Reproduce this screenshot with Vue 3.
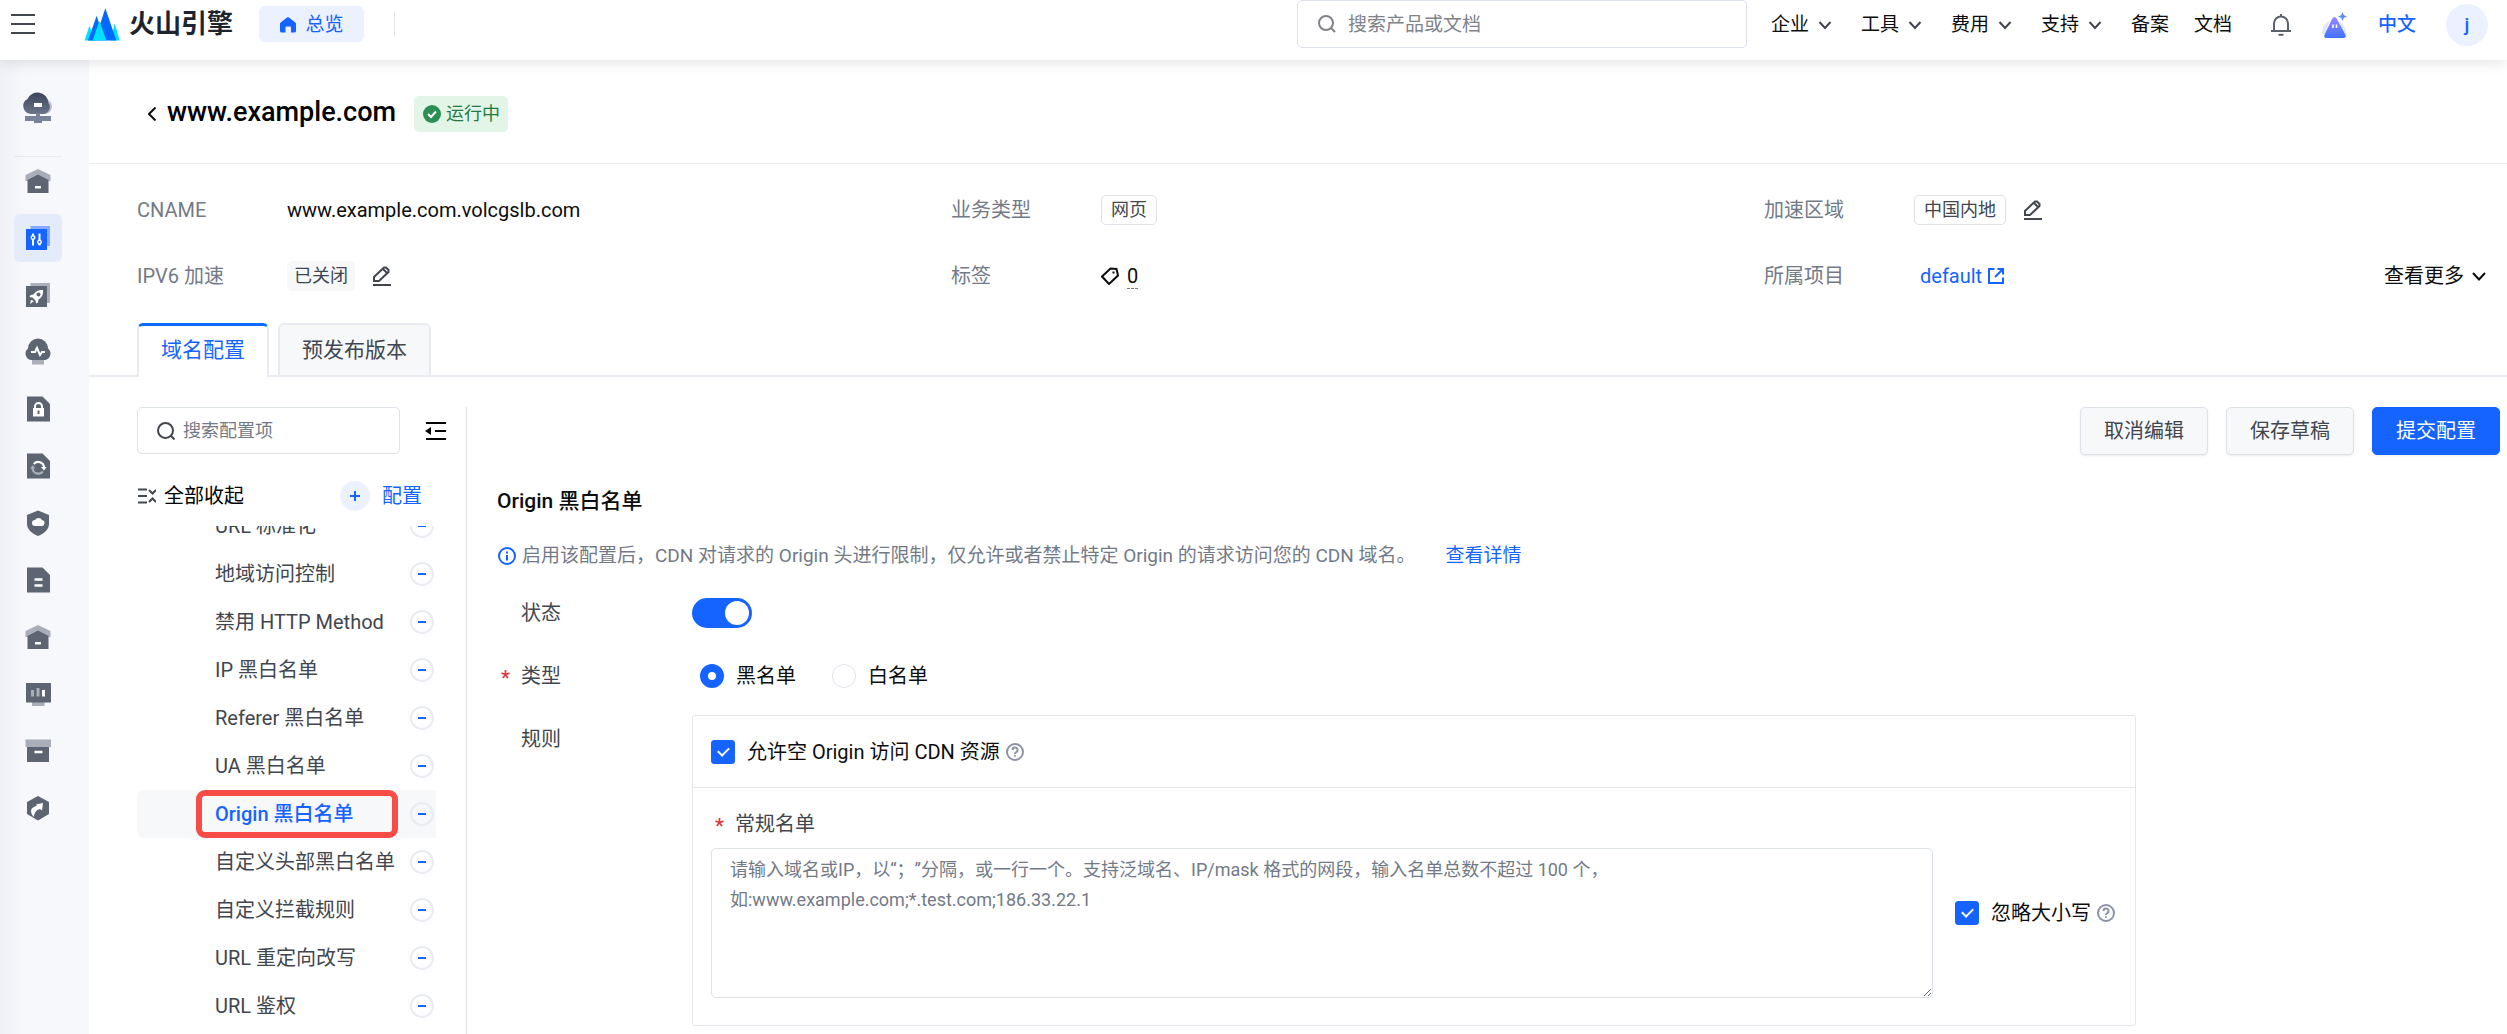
<template>
  <div class="app">
    <header class="topbar">
      <button class="menu-btn" aria-label="菜单">
        <svg viewBox="0 0 24 20" width="24" height="20"><path d="M0 1h24M0 10h24M0 19h24" stroke="#41464f" stroke-width="2"/></svg>
      </button>
      <a class="logo" href="#">
        <svg viewBox="0 0 108 98" width="36" height="33">
          <path d="M16 53 L2 97 H34Z" fill="#00e1ff"/>
          <path d="M92 45 L80 97 H107Z" fill="#00e1ff"/>
          <path d="M38 23 L12 97 H62Z" fill="#006aff"/>
          <path d="M64 0 L46 55 L62 97 H97Z" fill="#006aff"/>
          <path d="M46 38 L26 97 H67Z" fill="#00e1ff"/>
        </svg>
        <span class="brand">火山引擎</span>
      </a>
      <a class="overview" href="#">
        <svg viewBox="0 0 16 16" width="16" height="16"><path d="M7 .6a1.600 1.600 0 0 1 2 0l6.300 4.800c.5.400.7.800.7 1.400V14a1.600 1.600 0 0 1-1.600 1.600H11V10.500a1 1 0 0 0-1-1H6.500a1 1 0 0 0-1 1v5.100H1.600A1.600 1.600 0 0 1 0 14V6.800c0-.6.200-1 .7-1.400z" fill="#1664ff"/></svg>
        总览
      </a>
      <span class="split"></span>
      <label class="top-search">
        <svg class="icon" viewBox="0 0 18 18" width="18" height="18"><circle cx="8" cy="8" r="7"/><path d="M13 13l4 4"/></svg>
        <input type="text" placeholder="搜索产品或文档" aria-label="搜索产品或文档" />
      </label>
      <nav class="top-nav">
        <a v-for="item in topMenus" :key="item.name" href="#">
          {{ item.name }}
          <svg v-if="item.drop" class="icon" viewBox="0 0 14 14" width="14" height="14"><path d="M1.500 4L7 10l5.500-6"/></svg>
        </a>
      </nav>
      <div class="top-user">
        <button aria-label="消息">
          <svg viewBox="0 0 20 22" width="20" height="22" fill="none" stroke="#5c626d" stroke-width="2"><path d="M0 17h20M3 17V9.500a7 7 0 0 1 14 0V17M10 0v3"/><path d="M7.500 20.800h5"/></svg>
        </button>
        <button aria-label="智能助手">
          <svg viewBox="0 0 27 27" width="27" height="27">
            <defs>
              <linearGradient id="peak" x1="0" y1="0" x2="0" y2="1"><stop offset="0" stop-color="#9a86ff"/><stop offset="1" stop-color="#3f74ff"/></linearGradient>
            </defs>
            <path d="M8 9Q1 12 1 22l5 2zM19 9q5 4 7 14l-6 1z" fill="#e3e6ff"/>
            <path d="M11 7q2.500-4 5 0c2.500 5 5 9 8.500 16 .8 1.800 0 3-2 3h-17c-2 0-2.800-1.200-2-3C7 16 8.500 12 11 7z" fill="url(#peak)"/>
            <path d="M12 12.500v3.500M15.500 12.500v3.500" stroke="#fff" stroke-width="1.600"/>
            <path d="M21.500 0l1.300 3.200L26 4.500l-3.200 1.300L21.500 9l-1.300-3.200L17 4.500l3.200-1.300z" fill="#5a8bff"/>
          </svg>
        </button>
        <a class="lang" href="#">中文</a>
        <span class="avatar">j</span>
      </div>
    </header>

    <div class="body">
      <aside class="rail">
        <div class="rail-head">
          <svg viewBox="0 0 32 32" width="32" height="32">
            <defs>
              <linearGradient id="cloud" x1="0" y1="0" x2="0" y2="1"><stop offset="0" stop-color="#3b4559"/><stop offset="1" stop-color="#6b7589"/></linearGradient>
            </defs>
            <path d="M22 8a7.500 7.500 0 0 1 1 15H15z" fill="#b9c0ce"/>
            <path d="M8.500 23A8 8 0 0 1 5.500 8 11 11 0 0 1 26.500 12 7 7 0 0 1 22 23z" fill="url(#cloud)"/>
            <rect x="12" y="12" width="8" height="4" fill="#fff"/>
            <path d="M14 22h4v3h11v5H20v2h-8v-2H3v-5h11z" fill="#79839a"/>
          </svg>
        </div>
        <a v-for="item in railItems" :key="item.name" href="#" class="rail-item" :class="{ active: item.active }" :aria-label="item.name">
          <svg viewBox="0 0 28 28" width="28" height="28">
            <path v-for="(s, i) in item.shapes" :key="i" :d="s.d" :fill="s.fill || 'none'" :stroke="s.stroke" :stroke-width="s.w" />
          </svg>
        </a>
      </aside>

      <main class="page">
        <div class="title-row">
          <button class="back" aria-label="返回">
            <svg class="icon" viewBox="0 0 8 14" width="8" height="14"><path d="M7.500 .5L1 7l6.500 6.500"/></svg>
          </button>
          <h1>www.example.com</h1>
          <span class="status">
            <svg viewBox="0 0 18 18" width="18" height="18"><circle cx="9" cy="9" r="9" fill="#2b8f55"/><path d="M5 9l3 3 5-5.500" fill="none" stroke="#fff" stroke-width="2"/></svg>
            运行中
          </span>
        </div>

        <div class="info">
          <dl>
            <dt>CNAME</dt>
            <dd>www.example.com.volcgslb.com</dd>
          </dl>
          <dl>
            <dt>业务类型</dt>
            <dd><span class="tag">网页</span></dd>
          </dl>
          <dl>
            <dt>加速区域</dt>
            <dd>
              <span class="tag">中国内地</span>
              <button class="edit" aria-label="编辑加速区域">
                <svg viewBox="0 0 18 20" width="18" height="20"><path :d="pencil" /></svg>
              </button>
            </dd>
          </dl>
          <dl>
            <dt>IPV6 加速</dt>
            <dd>
              <span class="tag plain">已关闭</span>
              <button class="edit" aria-label="编辑 IPV6 加速">
                <svg viewBox="0 0 18 20" width="18" height="20"><path :d="pencil" /></svg>
              </button>
            </dd>
          </dl>
          <dl>
            <dt>标签</dt>
            <dd>
              <svg class="icon" viewBox="0 0 18 18" width="18" height="18"><path d="M1 9.500L9.500 1.500l6 .5 1.500 6.500L8 17z"/><path d="M11.500 5.500h2"/></svg>
              <span class="count">0</span>
            </dd>
          </dl>
          <dl>
            <dt>所属项目</dt>
            <dd>
              <a class="project" href="#">
                default
                <svg class="icon" viewBox="0 0 16 16" width="16" height="16"><path d="M6.500 1H1v14h14V9.500M9.500 1H15v5.500M15 1L7 9"/></svg>
              </a>
              <button class="more">
                查看更多
                <svg class="icon" viewBox="0 0 14 14" width="14" height="14"><path d="M1 4l6 6.500L13 4"/></svg>
              </button>
            </dd>
          </dl>
        </div>

        <div class="tabs" role="tablist">
          <button role="tab" class="tab active">域名配置</button>
          <button role="tab" class="tab">预发布版本</button>
        </div>

        <div class="workspace">
          <section class="tree">
            <div class="tree-top">
              <label class="tree-search">
                <svg class="icon" viewBox="0 0 18 18" width="18" height="18"><circle cx="8.500" cy="8.500" r="7.500"/><path d="M14 14l3.500 3.500"/></svg>
                <input type="text" placeholder="搜索配置项" aria-label="搜索配置项" />
              </label>
              <button aria-label="收起">
                <svg viewBox="0 0 22 18" width="22" height="18"><path d="M1 1h20M10 9h11M1 17h20" stroke="#000" stroke-width="2"/><path d="M6 5v8L0 9z"/></svg>
              </button>
            </div>
            <div class="tree-actions">
              <button class="collapse">
                <svg viewBox="0 0 18 16" width="18" height="16" fill="none" stroke="#41464f" stroke-width="2"><path d="M0 1.500h9M0 8h9M0 14.500h9M11 2l3.500 3.500L18 2M11 14l3.500-3.500L18 14"/></svg>
                全部收起
              </button>
              <button class="add">
                <span class="plus"><svg viewBox="0 0 10 10" width="10" height="10"><path d="M0 5h10M5 0v10" stroke="#1664ff" stroke-width="2"/></svg></span>
                配置
              </button>
            </div>
            <ul ref="list" class="tree-list">
              <li v-for="name in configs" :key="name" :class="{ active: name === current }" @click="current = name">
                <a href="#" @click.prevent>{{ name }}</a>
                <button class="minus" :aria-label="'移除 ' + name"></button>
                <span v-if="name === marked" class="mark"></span>
              </li>
            </ul>
          </section>

          <section class="detail">
            <div class="actions">
              <button>取消编辑</button>
              <button>保存草稿</button>
              <button class="primary">提交配置</button>
            </div>
            <h2>Origin 黑白名单</h2>
            <p class="hint">
              <svg class="icon" viewBox="0 0 18 18" width="18" height="18"><circle cx="9" cy="9" r="8"/><path d="M9 4.500v2M9 8v5.500"/></svg>
              启用该配置后，CDN 对请求的 Origin 头进行限制，仅允许或者禁止特定 Origin 的请求访问您的 CDN 域名。
              <a href="#">查看详情</a>
            </p>

            <div class="form">
              <label class="name" for="enabled">状态</label>
              <div class="field">
                <input id="enabled" v-model="enabled" class="switch" type="checkbox" role="switch" />
              </div>

              <span id="type-label" class="name required">类型</span>
              <div class="field radios" role="radiogroup" aria-labelledby="type-label">
                <label><input v-model="type" type="radio" name="type" value="black" />黑名单</label>
                <label><input v-model="type" type="radio" name="type" value="white" />白名单</label>
              </div>

              <span class="name">规则</span>
              <div class="panel">
                <div class="panel-head">
                  <label class="check"><input v-model="allowEmpty" type="checkbox" />允许空 Origin 访问 CDN 资源</label>
                  <svg class="icon help" viewBox="0 0 18 18" width="18" height="18"><circle cx="9" cy="9" r="8"/><path :d="question"/></svg>
                </div>
                <div class="panel-body">
                  <label class="name required" for="rules">常规名单</label>
                  <div class="rules">
                    <textarea id="rules" v-model="rules" :placeholder="placeholder"></textarea>
                    <div class="case">
                      <label class="check"><input v-model="ignoreCase" type="checkbox" />忽略大小写</label>
                      <svg class="icon help" viewBox="0 0 18 18" width="18" height="18"><circle cx="9" cy="9" r="8"/><path :d="question"/></svg>
                    </div>
                  </div>
                </div>
              </div>
            </div>
          </section>
        </div>
      </main>
    </div>
  </div>
</template>

<script setup>
import { ref, onMounted } from 'vue'

const topMenus = [
  { name: '企业', drop: true },
  { name: '工具', drop: true },
  { name: '费用', drop: true },
  { name: '支持', drop: true },
  { name: '备案' },
  { name: '文档' }
]

const dark = '#5d6573'
const light = '#a9aeb8'

const home = [
  { d: 'M14 2L26.5 8v6h-25V8z', fill: light },
  { d: 'M14 7.500L24.500 13v13h-21V13z', fill: dark },
  { d: 'M11 19h6v2.500h-6z', fill: '#fff' }
]
const sheet = { d: 'M3 1.500h15.500L26 9v17.500H3z', fill: dark }

const railItems = [
  { name: '概览', shapes: home },
  {
    name: '域名管理',
    active: true,
    shapes: [
      { d: 'M6.500 2H26v20H6.500z', fill: '#84abff' },
      { d: 'M2 5h21v21H2z', fill: '#1664ff' },
      { d: 'M9 9.500v12M15.500 9.500v12', stroke: '#fff', w: 2 },
      { d: 'M9 11a2.500 2.500 0 1 0 .01 0zM15.500 15.500a2.500 2.500 0 1 0 .01 0z', fill: '#fff' },
      { d: 'M9 12.500a1 1 0 1 0 .01 0zM15.500 17a1 1 0 1 0 .01 0z', fill: '#1664ff' }
    ]
  },
  {
    name: '刷新预热',
    shapes: [
      { d: 'M6.500 2H26v20H6.500z', fill: light },
      { d: 'M2 5h21v21H2z', fill: dark },
      { d: 'M19 9c-5-.5-8 2-9.500 4.500L6.500 14l-1 2 3 .5 3 3 .5 3 2-1 .5-3C17.500 16.500 19.500 14 19 9zM7 19l3 1-4 3z', fill: '#fff' },
      { d: 'M14.500 11.500a2 2 0 1 0 .01 0z', fill: dark }
    ]
  },
  {
    name: '监控',
    shapes: [
      { d: 'M8 20h12v6.500H8z', fill: light },
      { d: 'M7 22A6.500 6.500 0 0 1 4 10.500a10 10 0 0 1 20 0A6.500 6.500 0 0 1 21 22z', fill: dark },
      { d: 'M7 14h4l2-4 3 7 2-3h3', stroke: '#fff', w: 2 }
    ]
  },
  {
    name: '证书管理',
    shapes: [
      sheet,
      { d: 'M9 13h11v8.500H9z', fill: '#fff' },
      { d: 'M11 13v-1.500a3.500 3.500 0 0 1 7 0V13', stroke: '#fff', w: 2 },
      { d: 'M14.500 15.500v3.500', stroke: dark, w: 2 }
    ]
  },
  {
    name: '日志',
    shapes: [
      sheet,
      { d: 'M9.800 12A5.800 5.800 0 0 1 20 15.500', stroke: '#fff', w: 2.2 },
      { d: 'M17 15h5.500L20 18.500z', fill: '#fff' },
      { d: 'M18.800 19.500A5.800 5.800 0 0 1 8.500 16', stroke: light, w: 2.2 },
      { d: 'M6 16.500h5.500L8.800 13z', fill: light }
    ]
  },
  {
    name: '安全防护',
    shapes: [
      { d: 'M14 1.500L25 6v9c0 5-4.500 9.500-11 12C7.500 24.500 3 20 3 15V6z', fill: dark },
      { d: 'M11 17a3 3 0 0 1 0-6 4 4 0 0 1 7 0 3 3 0 0 1-1 6z', fill: '#fff' }
    ]
  },
  {
    name: '报表',
    shapes: [sheet, { d: 'M10.500 13.500h8M10.500 19.500h8', stroke: '#fff', w: 2.5 }]
  },
  { name: '资源', shapes: home },
  {
    name: '大屏',
    shapes: [
      { d: 'M8 22h12.500v4H8z', fill: light },
      { d: 'M2 3h25v19.500H2z', fill: dark },
      { d: 'M8.500 10v6.500M14 8v8.500', stroke: light, w: 3 },
      { d: 'M19.500 10v6.500', stroke: '#fff', w: 3 }
    ]
  },
  {
    name: '用量',
    shapes: [
      { d: 'M3 9h22v16H3z', fill: dark },
      { d: 'M1.500 2.500h25.500v7.500H1.500z', fill: light },
      { d: 'M10.500 15h8', stroke: '#fff', w: 2.5 }
    ]
  },
  {
    name: '工具',
    shapes: [
      { d: 'M14 2L25 8v12l-11 6.500L3 20V8z', fill: dark },
      { d: 'M12 10.500l7-1.500-1 7.500-2-1.500c-4 1-6 4-6 8-5-5-3.500-10 3-11z', fill: '#fff' }
    ]
  }
]

const pencil = 'M1 15v-4L11 1.500h2L15.500 4v2L6 15zM10 3l4 4M0 19h18'
const question = 'M6.500 7a2.500 2.500 0 1 1 3.500 2.300Q9 9.800 9 11M9 12.300v1.500'

const configs = [
  'URL 标准化',
  '地域访问控制',
  '禁用 HTTP Method',
  'IP 黑白名单',
  'Referer 黑白名单',
  'UA 黑白名单',
  'Origin 黑白名单',
  '自定义头部黑白名单',
  '自定义拦截规则',
  'URL 重定向改写',
  'URL 鉴权'
]
const marked = 'Origin 黑白名单'
const current = ref(marked)

const enabled = ref(true)
const type = ref('black')
const allowEmpty = ref(true)
const ignoreCase = ref(true)
const rules = ref('')
const placeholder = '请输入域名或IP，以“；”分隔，或一行一个。支持泛域名、IP/mask 格式的网段，输入名单总数不超过 100 个，\n如:www.example.com;*.test.com;186.33.22.1'

const list = ref(null)

onMounted(() => {
  list.value.scrollTop = 24
})
</script>

<style>
body {
  margin: 0;
  background: #fff;
}
</style>

<style scoped>
.app {
  height: 100vh;
  display: flex;
  flex-direction: column;
  overflow: hidden;
  font-family: Roboto, "Noto Sans CJK SC", sans-serif;
  font-size: 20px;
  line-height: 30px;
  color: #0c0d0e;
}

.app * {
  box-sizing: border-box;
}

button {
  display: flex;
  align-items: center;
  justify-content: center;
  padding: 0;
  border: 0;
  background: none;
  font: inherit;
  color: inherit;
  cursor: pointer;
}

a {
  color: #1664ff;
  text-decoration: none;
}

input,
textarea {
  margin: 0;
  font: inherit;
  color: inherit;
  outline: none;
}

svg {
  display: block;
  flex: none;
}

.icon {
  fill: none;
  stroke: currentColor;
  stroke-width: 2;
}

/* top bar */
.topbar {
  position: relative;
  z-index: 2;
  flex: none;
  display: flex;
  align-items: center;
  height: 60px;
  padding: 0 19px 12px 11px;
  background: #fff;
  box-shadow: 0 2px 14px rgba(0, 0, 0, 0.12);
  font-size: 19px;
}

.logo {
  display: flex;
  align-items: center;
  gap: 9px;
  margin-left: 49px;
  color: #1d2430;
}

.brand {
  font-size: 26px;
  font-weight: 700;
}

.overview {
  display: flex;
  align-items: center;
  justify-content: center;
  gap: 10px;
  width: 105px;
  height: 36px;
  margin-left: 26px;
  padding-top: 1px;
  border-radius: 6px;
  background: #ebf1ff;
}

.split {
  width: 1px;
  height: 24px;
  margin-left: 30px;
  background: #e3e5ea;
}

.top-search {
  display: flex;
  align-items: center;
  gap: 12px;
  width: 450px;
  height: 48px;
  margin-left: auto;
  padding: 0 20px;
  border: 1px solid #dde2ec;
  border-radius: 5px;
  color: #80838a;
}

.top-search input {
  flex: 1;
  min-width: 0;
  padding: 2px 0 0;
  border: 0;
  background: none;
}

::placeholder {
  color: #80838a;
  opacity: 1;
}

.top-nav {
  display: flex;
  gap: 25px;
  margin-left: 24px;
  padding-top: 2px;
}

.top-nav a {
  display: flex;
  align-items: center;
  gap: 9px;
  padding-right: 4px;
  color: #0c0d0e;
}

.top-nav a:nth-last-child(-n + 2) {
  padding-right: 0;
}

.top-nav .icon {
  color: #41464f;
}

.top-user {
  display: flex;
  align-items: center;
  gap: 30px;
  margin-left: 39px;
  padding-top: 2px;
}

.lang {
  font-weight: 500;
}

.avatar {
  width: 42px;
  height: 42px;
  border-radius: 50%;
  background: #ebf1ff;
  color: #1664ff;
  font-weight: 500;
  line-height: 42px;
  text-align: center;
}

/* left rail */
.body {
  flex: 1;
  min-height: 0;
  display: flex;
}

.rail {
  flex: none;
  display: flex;
  flex-direction: column;
  gap: 9px;
  width: 89px;
  padding-left: 14px;
  background: linear-gradient(90deg, #eff1f6, #f6f8fb 26px);
}

.rail-head {
  display: flex;
  justify-content: center;
  width: 48px;
  height: 97px;
  margin-bottom: -9px;
  padding-top: 31px;
  border-bottom: 1px solid #e7e9ee;
}

.rail-item {
  display: flex;
  align-items: center;
  justify-content: center;
  width: 48px;
  height: 48px;
  border-radius: 6px;
}

.rail-item.active {
  background: #e4ebfa;
}

/* page head */
.page {
  flex: 1;
  min-width: 0;
  display: flex;
  flex-direction: column;
}

.title-row {
  flex: none;
  display: flex;
  align-items: center;
  height: 104px;
  padding: 4px 0 0 59px;
  border-bottom: 1px solid #e8ebf0;
}

h1 {
  margin: 0 18px 4px 11px;
  font-size: 27px;
  font-weight: 500;
  line-height: 36px;
  color: #000;
}

.status {
  display: flex;
  align-items: center;
  gap: 5px;
  height: 36px;
  padding: 0 8px 0 9px;
  border-radius: 5px;
  background: #e2f5e7;
  font-size: 18px;
  color: #1f7a45;
}

.info {
  flex: none;
  display: grid;
  grid-template-columns: 814fr 813fr 722fr;
  padding: 13px 21px 14px 48px;
}

dl {
  display: flex;
  align-items: center;
  height: 66px;
  margin: 0;
}

dt {
  width: 150px;
  color: #737a87;
}

dd {
  flex: 1;
  display: flex;
  align-items: center;
  margin: 0;
}

.tag {
  height: 30px;
  padding: 0 9px;
  border: 1px solid #dfe2e8;
  border-radius: 5px;
  font-size: 18px;
  line-height: 28px;
  color: #41464f;
}

.tag.plain {
  padding: 0 6px;
  border-color: #f6f8fa;
  background: #f6f8fa;
}

.edit {
  margin-left: 18px;
}

.edit path {
  fill: none;
  stroke: #41464f;
  stroke-width: 2;
}

.count {
  margin-left: 8px;
  border-bottom: 1px dashed #737a87;
  line-height: 24px;
}

.project {
  display: flex;
  align-items: center;
  gap: 6px;
  padding-left: 6px;
}

.more {
  gap: 8px;
  margin-left: auto;
}

/* tabs */
.tabs {
  flex: none;
  display: flex;
  gap: 9px;
  height: 54px;
  padding-left: 48px;
  box-shadow: inset 0 -2px #e8ebf0;
}

.tab {
  padding: 0 22px;
  border: 2px solid #e8ebf0;
  border-radius: 6px 6px 0 0;
  background: #f6f8fa;
  font-size: 21px;
  color: #41464f;
}

.tab.active {
  padding-bottom: 3px;
  border-top: 3px solid #0a6cff;
  border-bottom: 0;
  background: #fff;
  color: #1664ff;
}

/* config tree */
.workspace {
  flex: 1;
  min-height: 0;
  display: flex;
  padding-top: 30px;
}

.tree {
  flex: none;
  display: flex;
  flex-direction: column;
  width: 378px;
  padding: 0 30px 0 48px;
  border-right: 1px solid #dde2e9;
}

.tree-top {
  display: flex;
  align-items: center;
  gap: 25px;
  margin-right: -11px;
}

.tree-search {
  display: flex;
  align-items: center;
  gap: 8px;
  width: 263px;
  height: 47px;
  padding: 0 19px;
  border: 1px solid #dde2e9;
  border-radius: 5px;
  font-size: 18px;
  color: #41464f;
}

.tree-search input {
  flex: 1;
  min-width: 0;
  padding: 0;
  border: 0;
}

.tree-actions {
  display: flex;
  align-items: center;
  justify-content: space-between;
  height: 72px;
  padding: 12px 14px 0 1px;
}

.collapse {
  gap: 8px;
  color: #000;
}

.add {
  gap: 12px;
  color: #1664ff;
}

.plus {
  display: flex;
  align-items: center;
  justify-content: center;
  width: 30px;
  height: 30px;
  border-radius: 50%;
  background: #ebf1ff;
}

.tree-list {
  flex: 1;
  min-height: 0;
  overflow-y: auto;
  scrollbar-width: none;
  margin: 0;
  padding: 0 0 24px;
  list-style: none;
}

.tree-list li {
  position: relative;
  display: flex;
  align-items: center;
  justify-content: space-between;
  height: 48px;
  padding: 0 2px 0 78px;
  border-radius: 6px 0 0 6px;
}

.tree-list a {
  color: #41464f;
  white-space: nowrap;
}

.tree-list .active {
  background: #f6f8fa;
}

.tree-list .active a {
  color: #1664ff;
  font-weight: 500;
}

.minus {
  width: 24px;
  height: 24px;
  border: 2px solid #e9ecf1;
  border-radius: 50%;
}

.minus::after {
  content: "";
  width: 8px;
  height: 2px;
  background: #1664ff;
}

.mark {
  position: absolute;
  inset: 0 38px 0 59px;
  border: 6px solid #f84c46;
  border-radius: 9px;
  pointer-events: none;
}

/* detail form */
.detail {
  flex: 1;
  min-width: 0;
  padding: 0 7px 0 30px;
}

.actions {
  display: flex;
  justify-content: flex-end;
  gap: 18px;
}

.actions button {
  width: 128px;
  height: 48px;
  border: 1px solid #dde2e9;
  border-radius: 5px;
  background: #f6f8fa;
  box-shadow: 0 1px 2px rgba(0, 0, 0, 0.08);
  color: #41464f;
}

.actions .primary {
  border-color: #1664ff;
  background: #1664ff;
  color: #fff;
}

h2 {
  margin: 31px 0 0;
  font-size: 21px;
  font-weight: 500;
  line-height: 30px;
}

.hint {
  display: flex;
  align-items: center;
  gap: 6px;
  margin: 25px 0 0;
  padding-left: 1px;
  font-size: 19px;
  color: #737a87;
}

.hint .icon {
  color: #1664ff;
}

.hint a {
  margin-left: 24px;
}

.form {
  display: grid;
  grid-template-columns: 171px minmax(0, 1444px);
  margin-top: 27px;
  padding-left: 24px;
}

.name {
  position: relative;
  align-self: start;
  color: #41464f;
}

.required::before {
  content: "*";
  position: absolute;
  left: -20px;
  top: 2px;
  color: #db373f;
  font-weight: 500;
}

.field {
  display: flex;
  align-items: center;
  height: 30px;
  margin-bottom: 33px;
}

.switch {
  appearance: none;
  display: flex;
  align-items: center;
  justify-content: flex-end;
  width: 60px;
  height: 30px;
  padding: 3px;
  border-radius: 15px;
  background: #1664ff;
}

.switch::after {
  content: "";
  width: 24px;
  height: 24px;
  border-radius: 50%;
  background: #fff;
}

.switch:not(:checked) {
  justify-content: flex-start;
  background: #c7ccd6;
}

.radios {
  gap: 36px;
  padding-left: 8px;
}

.radios label,
.check {
  display: flex;
  align-items: center;
  gap: 12px;
}

[type="radio"],
.check input {
  appearance: none;
  display: flex;
  align-items: center;
  justify-content: center;
  flex: none;
  width: 24px;
  height: 24px;
  border: 1px solid #dde2e9;
}

[type="radio"] {
  border-radius: 50%;
}

[type="radio"]:checked {
  border: 8px solid #1664ff;
}

.check input {
  border-radius: 3px;
}

.check input:checked {
  border-color: #1664ff;
  background: #1664ff;
}

.check input:checked::after {
  content: "";
  width: 5px;
  height: 9px;
  margin-bottom: 3px;
  border: solid #fff;
  border-width: 0 2px 2px 0;
  transform: rotate(45deg);
}

.panel {
  margin-top: -9px;
  border: 1px solid #e3e6ec;
  border-radius: 3px;
}

.panel-head {
  display: flex;
  align-items: center;
  gap: 6px;
  height: 72px;
  padding-left: 18px;
  border-bottom: 1px solid #e3e6ec;
}

.help {
  color: #8b93a5;
}

.panel-body {
  padding: 21px 20px 27px 18px;
}

.panel-body .name {
  display: inline-block;
  margin-left: 24px;
}

.rules {
  display: flex;
  align-items: center;
  gap: 22px;
  margin-top: 9px;
}

textarea {
  flex: 1;
  min-width: 0;
  height: 150px;
  padding: 6px 18px;
  border: 1px solid #dde2e9;
  border-radius: 5px;
  font-size: 18px;
  line-height: 30px;
  text-spacing-trim: space-all;
  resize: vertical;
}

textarea::placeholder,
.tree-search ::placeholder {
  color: #737a87;
}

.case {
  display: flex;
  align-items: center;
  gap: 6px;
  margin-top: -20px;
}
</style>
